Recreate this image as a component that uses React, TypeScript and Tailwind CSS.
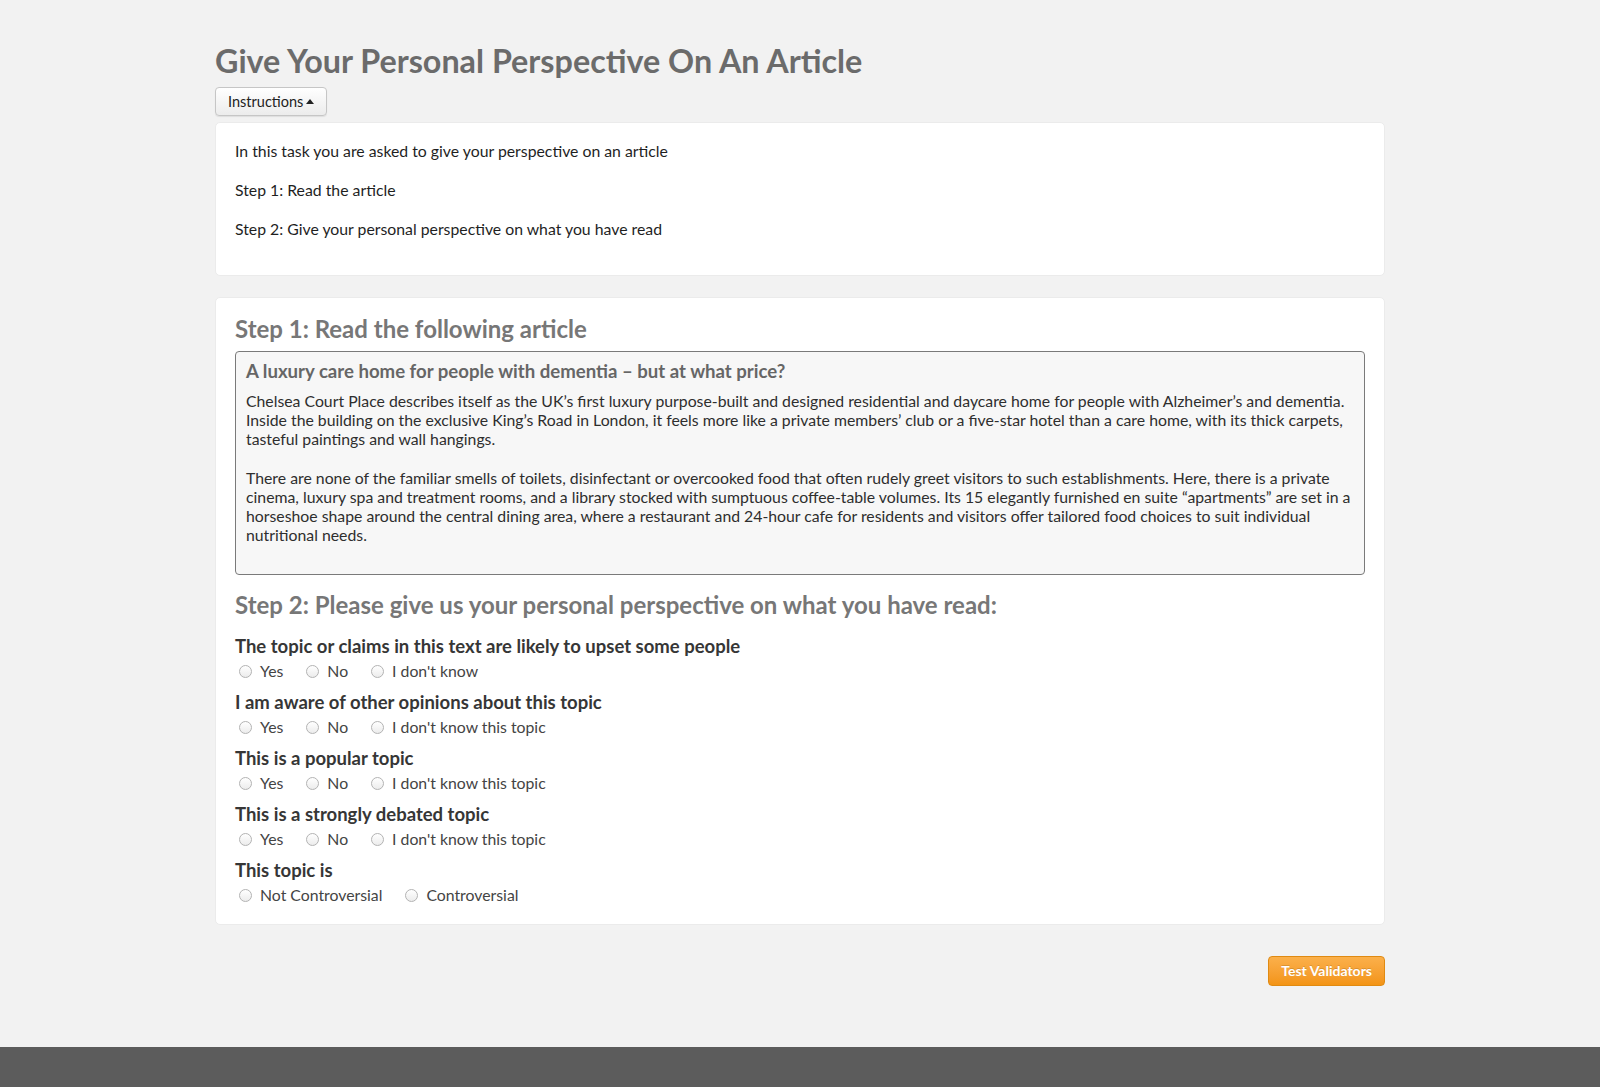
import React from "react";

function Radio({ label }: { label: string }) {
  return (
    <label className="flex items-center">
      <span className="w-[13px] h-[13px] rounded-full border border-[#b3b3b3] bg-gradient-to-b from-white to-[#ececec] ml-[4px] mr-[8px] mt-[2px]" />
      <span>{label}</span>
    </label>
  );
}

function Question({ q, options }: { q: string; options: string[] }) {
  return (
    <div className="mb-[10px] last:mb-0">
      <div className="text-[18.5px] leading-[22px] font-bold text-[#363636]">{q}</div>
      <div className="flex items-center gap-[19px] mt-[4px] text-[15.8px] leading-[20px] text-[#444]">
        {options.map((o) => (
          <Radio key={o} label={o} />
        ))}
      </div>
    </div>
  );
}

export default function App() {
  const yn = ["Yes", "No", "I don't know this topic"];
  return (
    <div
      className="min-h-screen flex flex-col bg-[#f2f2f2]"
      style={{ fontFamily: "Lato, 'Open Sans', sans-serif" }}
    >
      <main className="flex-1">
        <div className="w-[1170px] mx-auto pt-[43px]">
          <h1 className="text-[32.3px] leading-[35px] font-bold text-[#6b6b6b]">
            Give Your Personal Perspective On An Article
          </h1>
          <button className="mt-[9px] h-[29px] px-[12px] flex items-center gap-[3px] rounded-[4px] border border-[#c6c6c6] bg-gradient-to-b from-white to-[#ececec] text-[14.5px] text-[#222] shadow-[0_1px_1px_rgba(0,0,0,0.08)]">
            Instructions
            <svg width="8" height="5" viewBox="0 0 8 5">
              <path d="M0 5 L4 0 L8 5 Z" fill="#222" />
            </svg>
          </button>

          <section className="mt-[6px] bg-white rounded-[5px] border border-[#ebebeb] px-[19px] pt-[18px] pb-[17px] text-[15.8px] leading-[20px] text-[#1f1f1f]">
            <p className="mb-[19px]">In this task you are asked to give your perspective on an article</p>
            <p className="mb-[19px]">Step 1: Read the article</p>
            <p className="mb-[19px]">Step 2: Give your personal perspective on what you have read</p>
          </section>

          <section className="mt-[21px] bg-white rounded-[5px] border border-[#ebebeb] px-[19px] pt-[18px] pb-[19px]">
            <h2 className="text-[24px] leading-[26px] font-bold text-[#777]">Step 1: Read the following article</h2>
            <div className="mt-[9px] bg-[#f7f7f7] border border-[#7a7a7a] rounded-[4px] pl-[10px] pr-[10px] pt-[7px] pb-[29px]">
              <h3 className="text-[18.6px] leading-[24px] font-bold text-[#666]">
                A luxury care home for people with dementia – but at what price?
              </h3>
              <div className="mt-[8px] text-[15.8px] leading-[19.2px] text-[#2e2e2e]">
                <p>
                  Chelsea Court Place describes itself as the UK’s first luxury purpose-built and designed residential and daycare home for people with Alzheimer’s and dementia. Inside the building on the exclusive King’s Road in London, it feels more like a private members’ club or a five-star hotel than a care home, with its thick carpets, tasteful paintings and wall hangings.
                </p>
                <p className="mt-[19.2px]">
                  There are none of the familiar smells of toilets, disinfectant or overcooked food that often rudely greet visitors to such establishments. Here, there is a private cinema, luxury spa and treatment rooms, and a library stocked with sumptuous coffee-table volumes. Its 15 elegantly furnished en suite “apartments” are set in a horseshoe shape around the central dining area, where a restaurant and 24-hour cafe for residents and visitors offer tailored food choices to suit individual nutritional needs.
                </p>
              </div>
            </div>

            <h2 className="mt-[17px] text-[24px] leading-[26px] font-bold text-[#777]">
              Step 2: Please give us your personal perspective on what you have read:
            </h2>
            <div className="mt-[17px]">
              <Question q="The topic or claims in this text are likely to upset some people" options={["Yes", "No", "I don't know"]} />
              <Question q="I am aware of other opinions about this topic" options={yn} />
              <Question q="This is a popular topic" options={yn} />
              <Question q="This is a strongly debated topic" options={yn} />
              <Question q="This topic is" options={["Not Controversial", "Controversial"]} />
            </div>
          </section>

          <div className="flex justify-end mt-[31px]">
            <button className="h-[30px] px-[12px] rounded-[4px] border border-[#e08a12] bg-gradient-to-b from-[#fbb04a] to-[#f39414] text-white font-bold text-[14px] [text-shadow:0_-1px_0_rgba(0,0,0,0.15)]">
              Test Validators
            </button>
          </div>
        </div>
      </main>
      <footer className="h-[40px] bg-[#5c5c5c]" />
    </div>
  );
}
